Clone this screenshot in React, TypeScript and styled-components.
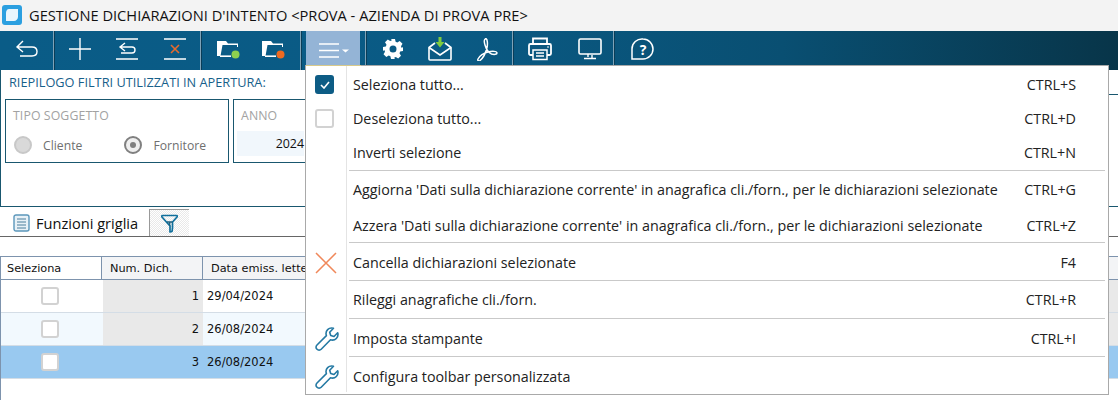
import { ReactNode } from "react";
import styled, { createGlobalStyle } from "styled-components";

const GlobalStyle = createGlobalStyle`
  html, body { margin: 0; padding: 0; background: #fff; overflow: hidden; }
  body { font-family: "Open Sans", "Noto Sans", sans-serif; }
`;

const Page = styled.div`
  position: relative;
  width: 1118px;
  height: 400px;
  overflow: hidden;
  background: #fff;
`;

const TitleBar = styled.div`
  height: 31px;
  background: #f3f3f3;
  display: flex;
  align-items: center;
  gap: 7px;
  padding: 0 0 2px 2px;
  box-sizing: border-box;
  font-size: 14.67px;
  color: #111;
`;

const Toolbar = styled.div`
  height: 39px;
  display: flex;
  align-items: stretch;
  background: linear-gradient(90deg, #0a5c87 0%, #0a5a84 40%, #094f72 70%, #083549 100%);
`;

const ToolGroup = styled.div`
  display: flex;
  align-items: center;
  height: 39px;
  border-right: 1px solid #7fa3b8;
  box-shadow: 1px 0 0 #0a3d58;
  margin-right: 1px;
  box-sizing: border-box;
`;

const ToolButton = styled.div<{ $w: number; $active?: boolean }>`
  width: ${({ $w }) => $w}px;
  height: 39px;
  padding-bottom: 3px;
  display: flex;
  align-items: center;
  justify-content: center;
  background: ${({ $active }) => ($active ? "#94b4d6" : "transparent")};
  box-sizing: border-box;
`;

const Content = styled.div`
  height: 330px;
`;

const FilterPanel = styled.div`
  height: 137px;
  box-sizing: border-box;
  border-left: 1px solid #19576f;
  border-bottom: 1px solid #19576f;
  padding-top: 1px;
`;

const FilterTitle = styled.div`
  font-size: 12.75px;
  color: #17608a;
  height: 28px;
  line-height: 22px;
  padding-left: 8px;
`;

const FilterRow = styled.div`
  display: flex;
  gap: 4px;
  padding-left: 4px;
`;

const FieldBox = styled.div<{ $w: number }>`
  width: ${({ $w }) => $w}px;
  height: 64px;
  box-sizing: border-box;
  border: 1px solid #19576f;
  padding: 6px 7px 0 7px;
  flex: none;
`;

const FarBoxEdge = styled.div`
  margin-left: auto;
  margin-top: -5px;
  width: 20px;
  height: 1px;
  background: #19576f;
`;

const FieldLabel = styled.div`
  font-size: 12.3px;
  color: #a2a2a2;
  line-height: 20px;
  letter-spacing: 0.1px;
`;

const RadioRow = styled.div`
  display: flex;
  margin: 10px 0 0 1px;
  align-items: center;
`;

const RadioItem = styled.div<{ $w: number }>`
  width: ${({ $w }) => $w}px;
  display: flex;
  align-items: center;
  gap: 11px;
  font-size: 12.2px;
  color: #6f6f6f;
`;

const Radio = styled.span<{ $checked?: boolean }>`
  width: 18px;
  height: 18px;
  box-sizing: border-box;
  border-radius: 50%;
  display: flex;
  align-items: center;
  justify-content: center;
  background: ${({ $checked }) => ($checked ? "#efefef" : "#d9d9d9")};
  border: 2px solid ${({ $checked }) => ($checked ? "#808080" : "#c8c8c8")};
  &::after {
    content: "";
    display: ${({ $checked }) => ($checked ? "block" : "none")};
    width: 6px;
    height: 6px;
    border-radius: 50%;
    background: #808080;
  }
`;

const YearValue = styled.div`
  margin: 5px -1px 0 -4px;
  height: 25px;
  line-height: 25px;
  background: #f1f7fc;
  font-size: 12.4px;
  color: #111;
  text-align: right;
`;

const TabBar = styled.div`
  height: 30px;
  box-sizing: border-box;
  border-bottom: 1px solid #666;
  display: flex;
  align-items: flex-start;
  padding: 2px 0 0 13px;
`;

const TabLabel = styled.div`
  display: flex;
  align-items: center;
  gap: 6px;
  height: 27px;
  font-size: 14.6px;
  color: #111;
  width: 136px;
`;

const TabIconBox = styled.div`
  width: 40px;
  height: 27px;
  box-sizing: border-box;
  border-top: 1px solid #999;
  border-left: 1px solid #999;
  background: repeating-conic-gradient(#e9e9e9 0 25%, #fff 0 50%) 0 0 / 2px 2px;
  display: flex;
  align-items: center;
  justify-content: center;
`;

const Grid = styled.div`
  margin-top: 19px;
  height: 145px;
  border-left: 1px solid #7d93ad;
  font-family: "DejaVu Sans", Verdana, sans-serif;
  font-size: 11.5px;
  color: #111;
`;

const GridRow = styled.div<{ $bg?: string; $header?: boolean }>`
  display: grid;
  grid-template-columns: 101px 101px 1fr 20px;
  height: ${({ $header }) => ($header ? 24 : 33)}px;
  box-sizing: border-box;
  background: ${({ $bg }) => $bg || "#fff"};
  border-bottom: 1px solid ${({ $header }) => ($header ? "#7d93ad" : "#d4dde6")};
  border-top: ${({ $header }) => ($header ? "1px solid #7d93ad" : "none")};
`;

const HeadCell = styled.div<{ $light?: boolean }>`
  display: flex;
  align-items: center;
  padding-left: ${({ $light }) => ($light ? 8 : 6)}px;
  font-size: 11.3px;
  background: ${({ $light }) => ($light ? "#f3f4f6" : "#fff")};
  border-right: 1px solid #7d93ad;
  white-space: nowrap;
  overflow: hidden;
`;

const CheckCell = styled.div`
  display: flex;
  align-items: center;
  justify-content: center;
  padding-right: 3px;
`;

const NumCell = styled.div<{ $bg?: string }>`
  display: flex;
  align-items: center;
  justify-content: flex-end;
  padding-right: 4px;
  background: ${({ $bg }) => $bg || "transparent"};
  margin-left: 1px;
`;

const DateCell = styled.div`
  display: flex;
  align-items: center;
  padding-left: 4px;
`;

const FillCell = styled.div<{ $bg?: string }>`
  background: ${({ $bg }) => $bg || "transparent"};
`;

const CheckBox = styled.span<{ $on?: boolean; $size?: number }>`
  width: ${({ $size }) => $size || 18}px;
  height: ${({ $size }) => $size || 18}px;
  box-sizing: border-box;
  flex: none;
  border-radius: 3px;
  background: ${({ $on }) => ($on ? "#0d5c85" : "#fff")};
  border: 2px solid ${({ $on }) => ($on ? "#0d5c85" : "#d2d2d2")};
  display: flex;
  align-items: center;
  justify-content: center;
`;

const Menu = styled.div`
  position: absolute;
  left: 305px;
  top: 65px;
  width: 804px;
  height: 330px;
  box-sizing: border-box;
  background: #fff;
  border: 1px solid #a9a9a9;
  padding-top: 2px;
  display: flex;
  flex-direction: column;
`;

const MenuCap = styled.div`
  position: absolute;
  left: 0;
  top: -1px;
  width: 55px;
  height: 1px;
  background: #d8c98a;
`;

const IconRail = styled.div`
  position: absolute;
  left: 40px;
  top: 0;
  bottom: 2px;
  width: 1px;
  background: #e4e4e4;
`;

const MenuRow = styled.div<{ $h: number; $low?: boolean }>`
  height: ${({ $h }) => $h}px;
  padding-top: ${({ $low }) => ($low ? 2 : 0)}px;
  box-sizing: border-box;
  display: flex;
  align-items: center;
  font-size: 14.3px;
  color: #222;
`;

const MenuIcon = styled.div`
  width: 47px;
  flex: none;
  display: flex;
  padding-left: 9px;
  box-sizing: border-box;
`;

const MenuLabel = styled.div`
  flex: 1;
  white-space: nowrap;
`;

const Shortcut = styled.div`
  flex: none;
  margin-right: 32px;
  text-align: right;
  white-space: nowrap;
`;

const Divider = styled.div`
  height: 1px;
  margin-left: 43px;
  margin-right: 3px;
  background: #c9c9c9;
`;

const AppLogo = () => (
  <svg width="20" height="20" viewBox="0 0 20 20">
    <rect x="0" y="0" width="20" height="20" rx="3" fill="#2b9fe0" />
    <path d="M7 4h9v8c0 2-2 4-4 4H4V8c0-2 1-4 3-4z" fill="#e9f6fd" />
  </svg>
);

const s = { fill: "none", stroke: "#fff", strokeWidth: 1.4 };

const BackIcon = () => (
  <svg width="24" height="20" viewBox="0 0 24 20">
    <path d="M8 2 2 8l6 5M2 8h15c3 0 5 1.500 5 4.500S20 17 17 17H5" {...s} />
  </svg>
);

const PlusIcon = () => (
  <svg width="24" height="24" viewBox="0 0 24 24">
    <path d="M12 1v22M1 12h22" {...s} />
  </svg>
);

const ListBackIcon = () => (
  <svg width="24" height="24" viewBox="0 0 24 24">
    <path d="M1 2h22M1 22h22M10 6 5 10l5 4M5 10h12c2 0 3 1 3 3s-1 3-3 3H6" {...s} />
  </svg>
);

const ListCrossIcon = () => (
  <svg width="24" height="24" viewBox="0 0 24 24">
    <path d="M1 2h22M1 22h22" {...s} />
    <path d="m8 8 8 8M16 8l-8 8" fill="none" stroke="#e86a2c" strokeWidth="1.6" />
  </svg>
);

const FolderIcon = ({ dot }: { dot: string }) => (
  <svg width="23" height="19" viewBox="0 0 23 19">
    <path d="M0 1h9l2 2.500h10V7h-1V5H5.500L3.500 16H0z" fill="#fff" />
    <path d="M3 16.200h11" stroke="#fff" strokeWidth="1.600" />
    <circle cx="18.500" cy="14.500" r="4" fill={dot} />
  </svg>
);

const HamburgerIcon = () => (
  <svg width="34" height="20" viewBox="0 0 34 20">
    <path d="M3 5h20M3 11.500h20M3 18h20" stroke="#fff" strokeWidth="1.600" />
    <path d="m26 10.500 7 0-3.500 3z" fill="#fff" />
  </svg>
);

const GearIcon = () => (
  <svg width="20" height="20" viewBox="0 0 20 20">
    <path
      fillRule="evenodd"
      fill="#fff"
      d="M8 0h4l.6 2.800 1.700.7 2.400-1.500 2.800 2.800-1.500 2.400.7 1.700L20 8v4l-2.800.6-.7 1.700 1.500 2.400-2.800 2.800-2.400-1.500-1.700.7L12 20H8l-.6-2.800-1.700-.7-2.400 1.500-2.800-2.800 1.500-2.400-.7-1.700L0 12V8l2.800-.6.7-1.700L2 3.300 4.800.5l2.400 1.500 1.700-.7zM10 6.500a3.500 3.500 0 1 0 0 7 3.500 3.500 0 0 0 0-7z"
    />
  </svg>
);

const MailIcon = () => (
  <svg width="24" height="24" viewBox="0 0 24 24">
    <path d="M7 6 1 10.500v11.500a1 1 0 0 0 1 1h20a1 1 0 0 0 1-1V10.500L17 6" {...s} strokeWidth={1.6} />
    <path d="m1 10.500 11 7.500 11-7.500" {...s} strokeWidth={1.6} />
    <path d="M10.500 0h3v5h3l-4.500 5.500L7.500 5h3z" fill="#7ecb3f" />
  </svg>
);

const PdfIcon = () => (
  <svg width="23" height="23" viewBox="0 0 23 23">
    <path
      d="M10.500 1C9 1 9 4 10 7c1.500 5 4 8 6.500 9 2.500.7 5.500.5 5.500-1 0-2-5-2-9-1-4 1-8 3.500-10 7-.8 1.500.7 2.500 2 1.500 3-2.500 6-8.500 7-13 .7-3 .7-9-1.500-9z"
      {...s}
      strokeWidth={1.5}
    />
  </svg>
);

const PrinterIcon = () => (
  <svg width="24" height="24" viewBox="0 0 24 24">
    <path d="M5 7V1.500h14V7M5 18H2.500A1.500 1.500 0 0 1 1 16.500v-8A1.500 1.500 0 0 1 2.500 7h19A1.500 1.500 0 0 1 23 8.500v8a1.500 1.500 0 0 1-1.500 1.500H19" {...s} strokeWidth={1.8} />
    <path d="M5 13h14v9.500H5zM8 16h8M8 19h8" {...s} strokeWidth={1.5} />
    <path d="M19 10h2" stroke="#fff" />
  </svg>
);

const MonitorIcon = () => (
  <svg width="24" height="22" viewBox="0 0 24 22">
    <rect x="1" y="1" width="22" height="15" rx="1.500" {...s} strokeWidth={1.6} />
    <path d="M10 16v3M14 17v3M6 20.500h12" {...s} />
  </svg>
);

const HelpIcon = () => (
  <svg width="24" height="22" viewBox="0 0 24 22">
    <path d="M13 1a10 10 0 1 1 0 20H2V11A10 10 0 0 1 13 1z" {...s} strokeWidth={1.5} />
    <text x="13" y="16.500" textAnchor="middle" fontSize="14" fontWeight="700" fill="#fff" fontFamily="Open Sans, sans-serif">?</text>
  </svg>
);

const GridListIcon = () => (
  <svg width="17" height="18" viewBox="0 0 17 18">
    <rect x="1" y="1" width="15" height="16" rx="2" fill="#e8f1f7" stroke="#5b97bb" strokeWidth="1.400" />
    <path d="M4 5h9M4 8h9M4 11h9M4 14h9" stroke="#4a7e9c" strokeWidth="1" />
  </svg>
);

const FunnelIcon = () => (
  <svg width="17" height="19" viewBox="0 0 17 19">
    <path d="M1.500 1.500h14c.8 0 1 .8.500 1.500l-4.500 5v6L11 17.500l-2 .5V12L1 3c-.5-.7-.2-1.500.5-1.500z" fill="none" stroke="#0f6f9c" strokeWidth="1.700" strokeLinejoin="round" />
    <path d="M6 8h5.500M8.700 8v4" stroke="#1e5f7c" strokeWidth="1.300" />
  </svg>
);

const CheckMark = () => (
  <svg width="10" height="8" viewBox="0 0 10 8">
    <path d="m1 4 3 3 5-6" fill="none" stroke="#fff" strokeWidth="1.600" />
  </svg>
);

const CrossIcon = () => (
  <svg width="22" height="22" viewBox="0 0 22 22">
    <path d="m1 1 20 20M21 1 1 21" stroke="#f0885a" strokeWidth="1.500" />
  </svg>
);

const WrenchIcon = () => (
  <svg width="24" height="24" viewBox="0 0 24 24">
    <path
      d="M16.500 1c-3 0-5.500 2.500-5.500 5.500 0 .8.200 1.500.4 2.100L2 18c-1.300 1.300-1.300 3 0 4.200 1.200 1.200 3 1.200 4.200 0l9.300-9.400c.6.200 1.300.3 2 .3 3 0 5.500-2.500 5.500-5.500 0-.7-.1-1.300-.3-1.900L19 9.500l-3.300-1-1-3.200L18.500 1.300c-.6-.2-1.300-.3-2-.3z"
      fill="none"
      stroke="#2479a3"
      strokeWidth="1.600"
      strokeLinejoin="round"
    />
  </svg>
);

type MenuEntry = { label: string; keys?: string; icon?: ReactNode; h: number; line?: boolean; low?: boolean };

const entries: MenuEntry[] = [
  { label: "Seleziona tutto...", keys: "CTRL+S", h: 33, icon: <CheckBox $on $size={19}><CheckMark /></CheckBox> },
  { label: "Deseleziona tutto...", keys: "CTRL+D", h: 34, icon: <CheckBox $size={19} /> },
  { label: "Inverti selezione", keys: "CTRL+N", h: 35, line: true },
  { label: "Aggiorna 'Dati sulla dichiarazione corrente' in anagrafica cli./forn., per le dichiarazioni selezionate", keys: "CTRL+G", h: 37 },
  { label: "Azzera 'Dati sulla dichiarazione corrente' in anagrafica cli./forn., per le dichiarazioni selezionate", keys: "CTRL+Z", h: 34, line: true },
  { label: "Cancella dichiarazioni selezionate", keys: "F4", h: 37, icon: <CrossIcon />, line: true, low: true },
  { label: "Rileggi anagrafiche cli./forn.", keys: "CTRL+R", h: 37, line: true },
  { label: "Imposta stampante", keys: "CTRL+I", h: 37, icon: <WrenchIcon />, line: true, low: true },
  { label: "Configura toolbar personalizzata", h: 37, icon: <WrenchIcon />, low: true },
];

const rows = [
  { num: 1, date: "29/04/2024", bg: "#fff", numBg: "#e9e9e9" },
  { num: 2, date: "26/08/2024", bg: "#f2f9fe", numBg: "#e9e9e9" },
  { num: 3, date: "26/08/2024", bg: "#99c9f0", numBg: "transparent" },
];

export default function App() {
  return (
    <Page>
      <GlobalStyle />
      <TitleBar>
        <AppLogo />
        GESTIONE DICHIARAZIONI D'INTENTO &lt;PROVA - AZIENDA DI PROVA PRE&gt;
      </TitleBar>
      <Toolbar>
        <ToolGroup>
          <ToolButton $w={53}><BackIcon /></ToolButton>
        </ToolGroup>
        <ToolGroup>
          <ToolButton $w={50}><PlusIcon /></ToolButton>
          <ToolButton $w={44}><ListBackIcon /></ToolButton>
          <ToolButton $w={51}><ListCrossIcon /></ToolButton>
        </ToolGroup>
        <ToolGroup>
          <ToolButton $w={52}><FolderIcon dot="#8ed14f" /></ToolButton>
          <ToolButton $w={38}><FolderIcon dot="#ef6a21" /></ToolButton>
          <ToolButton $w={8} />
        </ToolGroup>
        <ToolGroup>
          <ToolButton $w={4} />
          <ToolButton $w={54} $active><HamburgerIcon /></ToolButton>
          <ToolButton $w={5} />
        </ToolGroup>
        <ToolGroup>
          <ToolButton $w={52}><GearIcon /></ToolButton>
          <ToolButton $w={42}><MailIcon /></ToolButton>
          <ToolButton $w={51}><PdfIcon /></ToolButton>
        </ToolGroup>
        <ToolGroup>
          <ToolButton $w={52}><PrinterIcon /></ToolButton>
          <ToolButton $w={47}><MonitorIcon /></ToolButton>
        </ToolGroup>
        <ToolButton $w={54}><HelpIcon /></ToolButton>
      </Toolbar>
      <Content>
        <FilterPanel>
          <FilterTitle>RIEPILOGO FILTRI UTILIZZATI IN APERTURA:</FilterTitle>
          <FilterRow>
            <FieldBox $w={224}>
              <FieldLabel>TIPO SOGGETTO</FieldLabel>
              <RadioRow>
                <RadioItem $w={112}><Radio />Cliente</RadioItem>
                <RadioItem $w={98}><Radio $checked />Fornitore</RadioItem>
              </RadioRow>
            </FieldBox>
            <FieldBox $w={78}>
              <FieldLabel>ANNO</FieldLabel>
              <YearValue>2024</YearValue>
            </FieldBox>
            <FarBoxEdge />
          </FilterRow>
        </FilterPanel>
        <TabBar>
          <TabLabel><GridListIcon />Funzioni griglia</TabLabel>
          <TabIconBox><FunnelIcon /></TabIconBox>
        </TabBar>
        <Grid>
          <GridRow $header>
            <HeadCell>Seleziona</HeadCell>
            <HeadCell $light>Num. Dich.</HeadCell>
            <HeadCell $light>Data emiss. lettera</HeadCell>
            <FillCell $bg="#f3f4f6" />
          </GridRow>
          {rows.map((r) => (
            <GridRow key={r.num} $bg={r.bg}>
              <CheckCell><CheckBox /></CheckCell>
              <NumCell $bg={r.numBg}>{r.num}</NumCell>
              <DateCell>{r.date}</DateCell>
              <FillCell $bg={r.numBg} />
            </GridRow>
          ))}
        </Grid>
      </Content>
      <Menu>
        <MenuCap />
        <IconRail />
        {entries.map((e) => (
          <div key={e.label}>
            <MenuRow $h={e.h} $low={e.low}>
              <MenuIcon>{e.icon}</MenuIcon>
              <MenuLabel>{e.label}</MenuLabel>
              {e.keys && <Shortcut>{e.keys}</Shortcut>}
            </MenuRow>
            {e.line && <Divider />}
          </div>
        ))}
      </Menu>
    </Page>
  );
}
